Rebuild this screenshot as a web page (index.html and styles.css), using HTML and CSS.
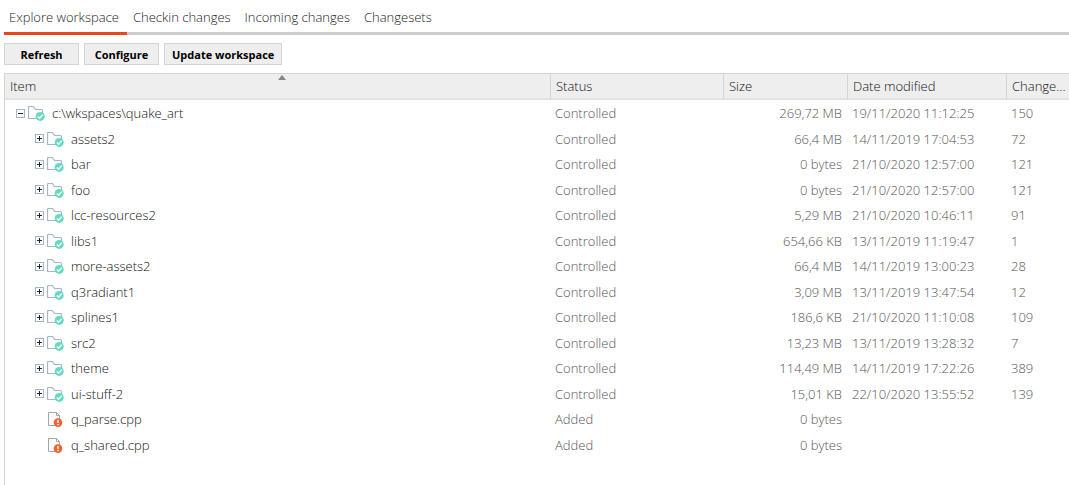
FILE: index.html
```
<!DOCTYPE html>
<html lang="en">
<head>
    <meta charset="UTF-8">
    <meta name="viewport" content="width=device-width, initial-scale=1.0">
    <title>Workspace Explorer</title>
    <link rel="stylesheet" href="styles.css">
</head>
<body>
    <!-- Shared icons -->
    <svg class="icon-defs" aria-hidden="true">
        <symbol id="folder" viewBox="0 0 17 16">
            <path d="M0.5 13.5V2.5Q0.5 1.5 1.5 1.5H5.5L7.5 4.5H13.5Q14.5 4.5 14.5 5.5V13.5Z" fill="#fcfdfe" stroke="#a3b7c8" stroke-width="1.2"/>
            <circle cx="12.2" cy="11.4" r="4.5" fill="#66d9c2"/>
            <path d="M9.8 11.5L11.6 13.3L14.8 9.6" fill="none" stroke="#fff" stroke-width="1.4"/>
        </symbol>
        <symbol id="file" viewBox="0 0 17 16">
            <path d="M1.5 14.5V1.5H9.5L12.5 4.5V14.5Z" fill="#fafafa" stroke="#a6a6a6"/>
            <path d="M9.5 1.5V4.5H12.5" fill="none" stroke="#a6a6a6"/>
            <circle cx="11" cy="11.6" r="4.3" fill="#f4622d"/>
            <path d="M11 9V12M11 13V14.2" fill="none" stroke="#fff" stroke-width="1.5"/>
        </symbol>
        <symbol id="plus" viewBox="0 0 9 9">
            <rect x="0.5" y="0.5" width="8" height="8" fill="#fff" stroke="#a3b5c6"/>
            <path d="M2 4.5H7M4.5 2V7" stroke="#222"/>
        </symbol>
        <symbol id="minus" viewBox="0 0 9 9">
            <rect x="0.5" y="0.5" width="8" height="8" fill="#fff" stroke="#a3b5c6"/>
            <path d="M2 4.5H7" stroke="#222"/>
        </symbol>
    </svg>

    <nav class="tabs">
        <a href="#explore" class="tab active">Explore workspace</a>
        <a href="#checkin" class="tab">Checkin changes</a>
        <a href="#incoming" class="tab">Incoming changes</a>
        <a href="#changesets" class="tab">Changesets</a>
    </nav>

    <div class="toolbar">
        <button type="button">Refresh</button>
        <button type="button">Configure</button>
        <button type="button">Update workspace</button>
    </div>

    <div class="explorer">
        <table class="items">
            <colgroup>
                <col>
                <col class="col-status">
                <col class="col-size">
                <col class="col-date">
                <col class="col-change">
            </colgroup>
            <thead>
                <tr>
                    <th class="sorted">Item</th>
                    <th>Status</th>
                    <th>Size</th>
                    <th>Date modified</th>
                    <th>Change...</th>
                </tr>
            </thead>
            <tbody id="itemList"></tbody>
        </table>
    </div>

    <script>
        const items = [
            ['root', 'c:\\wkspaces\\quake_art', 'Controlled', '269,72 MB', '19/11/2020 11:12:25', '150'],
            ['folder', 'assets2', 'Controlled', '66,4 MB', '14/11/2019 17:04:53', '72'],
            ['folder', 'bar', 'Controlled', '0 bytes', '21/10/2020 12:57:00', '121'],
            ['folder', 'foo', 'Controlled', '0 bytes', '21/10/2020 12:57:00', '121'],
            ['folder', 'lcc-resources2', 'Controlled', '5,29 MB', '21/10/2020 10:46:11', '91'],
            ['folder', 'libs1', 'Controlled', '654,66 KB', '13/11/2019 11:19:47', '1'],
            ['folder', 'more-assets2', 'Controlled', '66,4 MB', '14/11/2019 13:00:23', '28'],
            ['folder', 'q3radiant1', 'Controlled', '3,09 MB', '13/11/2019 13:47:54', '12'],
            ['folder', 'splines1', 'Controlled', '186,6 KB', '21/10/2020 11:10:08', '109'],
            ['folder', 'src2', 'Controlled', '13,23 MB', '13/11/2019 13:28:32', '7'],
            ['folder', 'theme', 'Controlled', '114,49 MB', '14/11/2019 17:22:26', '389'],
            ['folder', 'ui-stuff-2', 'Controlled', '15,01 KB', '22/10/2020 13:55:52', '139'],
            ['file', 'q_parse.cpp', 'Added', '0 bytes', '', ''],
            ['file', 'q_shared.cpp', 'Added', '0 bytes', '', '']
        ];

        function expander(type, name) {
            if (type === 'file') return '';
            const sign = type === 'root' ? 'minus' : 'plus';
            return `<button type="button" class="expander" aria-label="Toggle ${name}"><svg><use href="#${sign}"/></svg></button>`;
        }

        document.getElementById('itemList').innerHTML = items.map(([type, name, status, size, date, change]) => `
            <tr>
                <td>
                    <div class="item ${type}">
                        ${expander(type, name)}
                        <svg class="icon"><use href="#${type === 'file' ? 'file' : 'folder'}"/></svg>
                        <span class="name">${name}</span>
                    </div>
                </td>
                <td>${status}</td>
                <td class="size">${size}</td>
                <td>${date}</td>
                <td>${change}</td>
            </tr>
        `).join('');
    </script>
</body>
</html>
```
FILE: styles.css
```
* {
    box-sizing: border-box;
}

body {
    margin: 0;
    padding-left: 4px;
    min-height: 100vh;
    display: flex;
    flex-direction: column;
    background-color: white;
    font-family: 'Open Sans', 'Segoe UI', sans-serif;
    font-size: 13px;
    font-weight: 300;
    color: #111;
}

.icon-defs {
    display: none;
}

.tabs {
    display: flex;
    gap: 1px;
    height: 35px;
    border-bottom: 3px solid #cbcbcb;
}

.tab {
    height: 35px;
    padding: 6px 8px 0 5px;
    line-height: 22px;
    color: #222;
    text-decoration: none;
    white-space: nowrap;
}

.tab.active {
    border-bottom: 3px solid #e8471c;
}

.toolbar {
    display: flex;
    gap: 5px;
    padding: 8px 0;
}

.toolbar button {
    min-width: 75px;
    height: 22px;
    padding: 0 7px;
    border: 1px solid #d5d5d5;
    background-color: #eee;
    font-family: inherit;
    font-size: 11px;
    font-weight: 700;
    color: #000;
    cursor: pointer;
}

.toolbar button:hover {
    background-color: #e2e2e2;
}

.explorer {
    flex: 1;
    border-left: 1px solid #d5d5d5;
}

.items {
    width: 100%;
    table-layout: fixed;
    border-collapse: separate;
    border-spacing: 0;
}

.col-status {
    width: 173px;
}

.col-size {
    width: 124px;
}

.col-date {
    width: 159px;
}

.col-change {
    width: 63px;
}

th {
    height: 27px;
    padding: 0 0 0 5px;
    border-top: 1px solid #d5d5d5;
    border-bottom: 2px solid #e2e2e2;
    border-left: 1px solid #d5d5d5;
    background-color: #eee;
    font-weight: 300;
    text-align: left;
    white-space: nowrap;
}

th:first-child {
    border-left: none;
}

.sorted {
    position: relative;
}

.sorted::after {
    content: '';
    position: absolute;
    top: 1px;
    left: 50%;
    border: 4px solid transparent;
    border-top: none;
    border-bottom: 5px solid #858585;
}

td {
    height: 26px;
    padding: 0 0 0 5px;
    color: #555;
    white-space: nowrap;
}

tr:nth-child(even) td {
    height: 25px;
}

td.size {
    padding: 0 5px 0 0;
    text-align: right;
}

.item {
    display: flex;
    align-items: center;
    padding-left: 6px;
}

.item.folder {
    padding-left: 25px;
}

.item.file {
    padding-left: 37px;
}

.expander {
    display: flex;
    margin-right: 3px;
    padding: 0;
    border: none;
    background: none;
    cursor: pointer;
}

.expander svg {
    width: 9px;
    height: 9px;
}

.icon {
    width: 17px;
    height: 16px;
    margin-right: 7px;
}

.name {
    color: #111;
}
```
